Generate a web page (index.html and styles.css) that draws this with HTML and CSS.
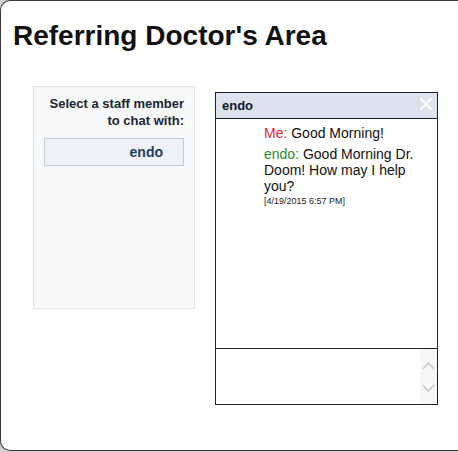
FILE: index.html
```html
<!DOCTYPE html>
<html>
<head>
<meta charset="utf-8">
<link rel="stylesheet" href="styles.css">
</head>
<body>
<div class="frame">
  <h1 class="title">Referring Doctor's Area</h1>
  <div class="content">
    <div class="staff-panel">
      <div class="staff-label">Select a staff member to chat with:</div>
      <div class="staff-btn">endo</div>
    </div>
    <div class="chat">
      <div class="chat-head">
        <span class="chat-name">endo</span>
        <svg class="chat-close" width="12" height="12" viewBox="0 0 12 12"><path d="M1 1L11 11M11 1L1 11" stroke="#fff" stroke-width="2.2" stroke-linecap="round"/></svg>
      </div>
      <div class="chat-msgs">
        <p class="msg"><span class="me">Me:</span> <span>Good Morning!</span></p>
        <p class="msg"><span class="them">endo:</span> <span>Good Morning Dr. Doom! How may I help you?</span></p>
        <p class="stamp">[4/19/2015 6:57 PM]</p>
      </div>
      <div class="chat-input">
        <div class="input-field"></div>
        <div class="scroll">
          <svg width="13" height="9" viewBox="0 0 13 9"><path d="M1 8L6.5 2L12 8" fill="none" stroke="#c8c8c8" stroke-width="1.6"/></svg>
          <svg width="13" height="9" viewBox="0 0 13 9"><path d="M1 1L6.5 7L12 1" fill="none" stroke="#c8c8c8" stroke-width="1.6"/></svg>
        </div>
      </div>
    </div>
  </div>
</div>
</body>
</html>
```
FILE: styles.css
```css
html {
  overflow: hidden;
  background: #d2d2d2;
}
body {
  margin: 0;
  padding: 0;
  background: #d2d2d2;
}
.frame {
  box-sizing: border-box;
  width: 458px;
  height: 451px;
  background: #fff;
  border: 1px solid #3c3c3c;
  border-right: 0;
  border-radius: 10px 0 0 10px;
  font-family: "Liberation Sans", Arial, sans-serif;
  color: #111;
}
.title {
  margin: 19px 0 0 12px;
  font-size: 28px;
  line-height: 32px;
  font-weight: bold;
  color: #111;
}
.content {
  display: flex;
  align-items: flex-start;
  gap: 20px;
  padding-left: 32px;
  margin-top: 34px;
}
.staff-panel {
  box-sizing: border-box;
  width: 162px;
  height: 223px;
  border: 1px solid #dfe4ea;
  background: #f7f9fb;
  padding: 8px 10px;
}
.staff-label {
  font-size: 13px;
  line-height: 17px;
  font-weight: bold;
  text-align: right;
  color: #1b2535;
}
.staff-btn {
  box-sizing: border-box;
  margin-top: 9px;
  height: 28px;
  border: 1px solid #c6cdd7;
  background: #eef1f6;
  text-align: right;
  padding-right: 20px;
  font-size: 14px;
  font-weight: bold;
  line-height: 26px;
  color: #1f3a66;
}
.chat {
  box-sizing: border-box;
  margin-top: 6px;
  width: 223px;
  height: 313px;
  border: 1px solid #1a2230;
  display: flex;
  flex-direction: column;
}
.chat-head {
  height: 25px;
  border-bottom: 1px solid #1a2230;
  background: #dce3ee;
  display: flex;
  align-items: center;
  justify-content: space-between;
  padding: 0 5px 0 6px;
}
.chat-name {
  font-size: 13px;
  font-weight: bold;
  color: #111a2a;
  line-height: 16px;
  margin-top: 1px;
}
.chat-close {
  margin-top: -3px;
}
.chat-msgs {
  height: 230px;
  box-sizing: border-box;
  padding: 6px 8px 0 48px;
  border-bottom: 1px solid #1a2230;
  font-size: 14px;
  line-height: 16px;
}
.msg {
  margin: 0 0 5px;
}
.me { color: #e32a2a; }
.them { color: #2c8a2c; }
.stamp {
  font-size: 9px;
  line-height: 11px;
  margin: -3px 0 0;
  color: #222;
}
.chat-input {
  flex: 1;
  display: flex;
}
.input-field {
  flex: 1;
}
.scroll {
  width: 17px;
  background: #f7f7f7;
  display: flex;
  flex-direction: column;
  align-items: center;
  justify-content: center;
  gap: 14px;
}
```
